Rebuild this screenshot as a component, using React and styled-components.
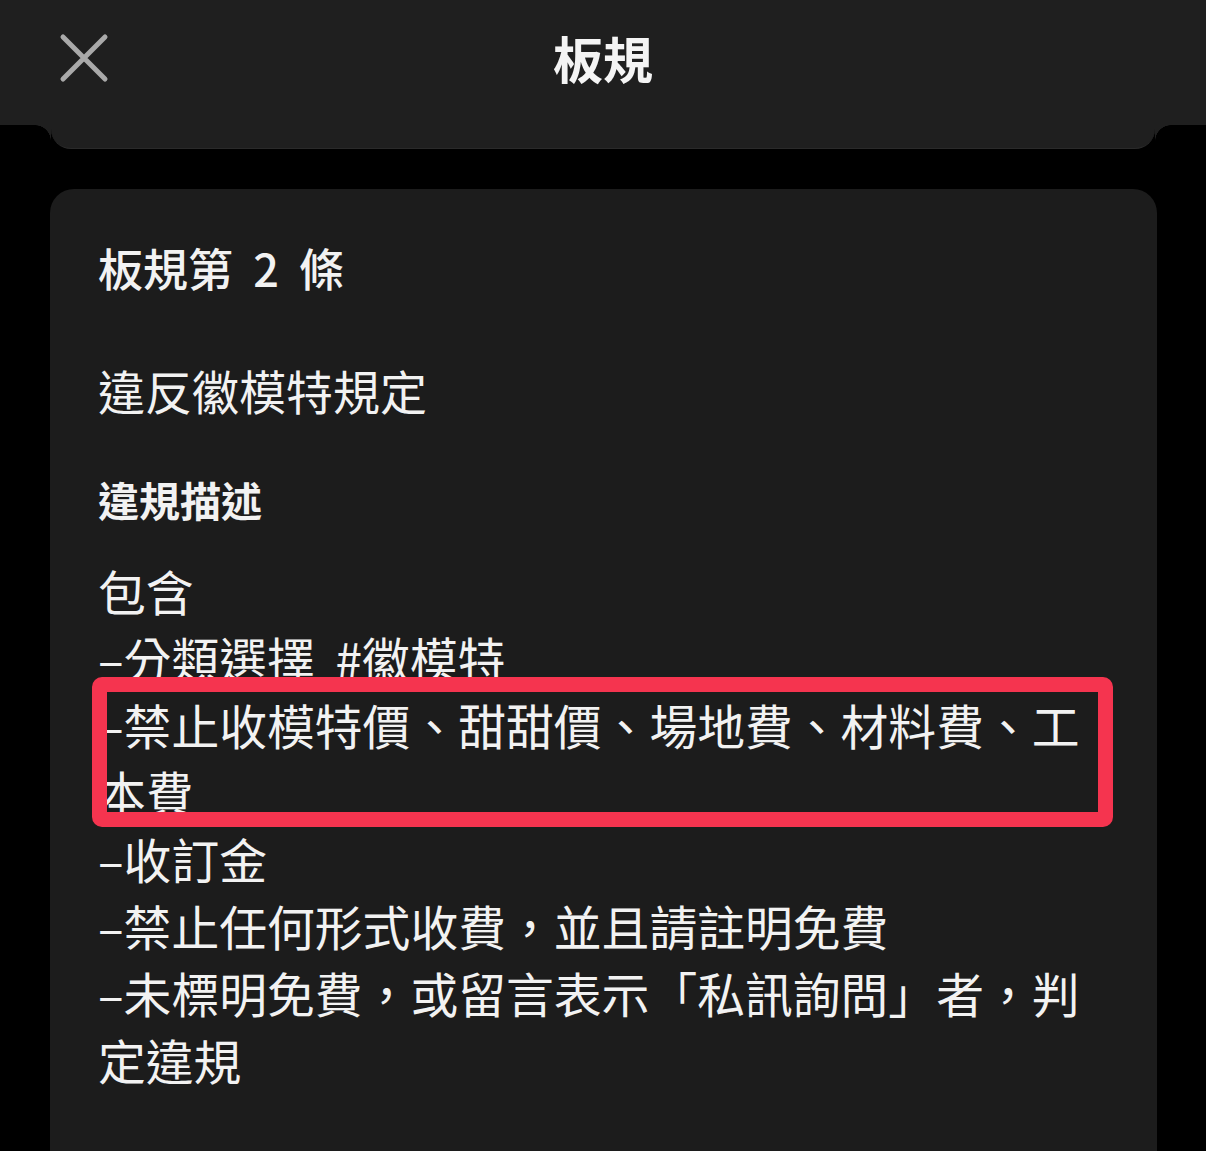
import React from "react";
import styled, { createGlobalStyle } from "styled-components";

const GlobalStyle = createGlobalStyle`
  html, body {
    margin: 0;
    padding: 0;
    background: #000;
  }
  body {
    font-family: "Noto Sans CJK TC", "Noto Sans", sans-serif;
    color: #f2f2f2;
  }
`;

const Page = styled.div`
  min-height: 1151px;
  background: #000;
  overflow: hidden;
`;

const Header = styled.header`
  position: relative;
  height: 125px;
  background: #1f1f1f;
  display: flex;
  align-items: center;
  justify-content: center;
`;

const CloseButton = styled.button`
  position: absolute;
  left: 56px;
  top: 30px;
  width: 56px;
  height: 56px;
  padding: 0;
  border: 0;
  background: none;
  display: flex;
  align-items: center;
  justify-content: center;
`;

const Title = styled.h1`
  margin: 0;
  margin-top: -12px;
  font-size: 50px;
  font-weight: 700;
  line-height: 1;
  color: #f4f4f4;
`;

const PrevCardTail = styled.div`
  position: relative;
  height: 23px;
  margin: 0 51px;
  background: #1f1f1f;
  border-radius: 0 0 20px 20px;
  border-bottom: 1px solid #2a2a2a;

  &::before,
  &::after {
    content: "";
    position: absolute;
    top: 0;
    width: 16px;
    height: 16px;
  }
  &::before {
    left: -16px;
    background: radial-gradient(circle at 0 100%, transparent 15.5px, #1f1f1f 16px);
  }
  &::after {
    right: -16px;
    background: radial-gradient(circle at 100% 100%, transparent 15.5px, #1f1f1f 16px);
  }
`;

const Card = styled.section`
  margin: 40px 49px 0 50px;
  background: #1c1c1c;
  border-radius: 24px 24px 0 0;
  padding: 46px 48px 120px 48px;
  word-spacing: 10px;
`;

const RuleTitle = styled.h2`
  margin: 0;
  font-size: 45px;
  font-weight: 500;
  line-height: 66px;
`;

const RuleName = styled.p`
  margin: 56px 0 0;
  font-size: 47px;
  font-weight: 400;
  line-height: 66px;
`;

const SectionLabel = styled.h3`
  margin: 46px 0 0;
  font-size: 41px;
  font-weight: 600;
  line-height: 60px;
`;

const Description = styled.div`
  margin-top: 28px;
  font-size: 47.8px;
  line-height: 67px;
`;

const Item = styled.div`
  position: relative;

  ${(p) =>
    p.$marked &&
    `
    &::after {
      content: "";
      position: absolute;
      left: -6px;
      right: -4px;
      top: -14px;
      bottom: -2px;
      border: 15px solid #f5344f;
      border-radius: 10px;
      pointer-events: none;
    }
  `}
`;

const CloseIcon = () => (
  <svg width="52" height="52" viewBox="0 0 52 52">
    <path
      d="M5 5 L47 47 M47 5 L5 47"
      stroke="#a9a9a9"
      strokeWidth="5"
      strokeLinecap="round"
    />
  </svg>
);

const items = [
  { text: "包含" },
  { text: "–分類選擇 #徽模特" },
  { text: "–禁止收模特價、甜甜價、場地費、材料費、工本費", marked: true },
  { text: "–收訂金" },
  { text: "–禁止任何形式收費，並且請註明免費" },
  { text: "–未標明免費，或留言表示「私訊詢問」者，判定違規" },
];

export default function App() {
  return (
    <Page>
      <GlobalStyle />
      <Header>
        <CloseButton aria-label="關閉">
          <CloseIcon />
        </CloseButton>
        <Title>板規</Title>
      </Header>
      <PrevCardTail />
      <Card>
        <RuleTitle>板規第 2 條</RuleTitle>
        <RuleName>違反徽模特規定</RuleName>
        <SectionLabel>違規描述</SectionLabel>
        <Description>
          {items.map((it) => (
            <Item key={it.text} $marked={it.marked}>
              {it.text}
            </Item>
          ))}
        </Description>
      </Card>
    </Page>
  );
}
